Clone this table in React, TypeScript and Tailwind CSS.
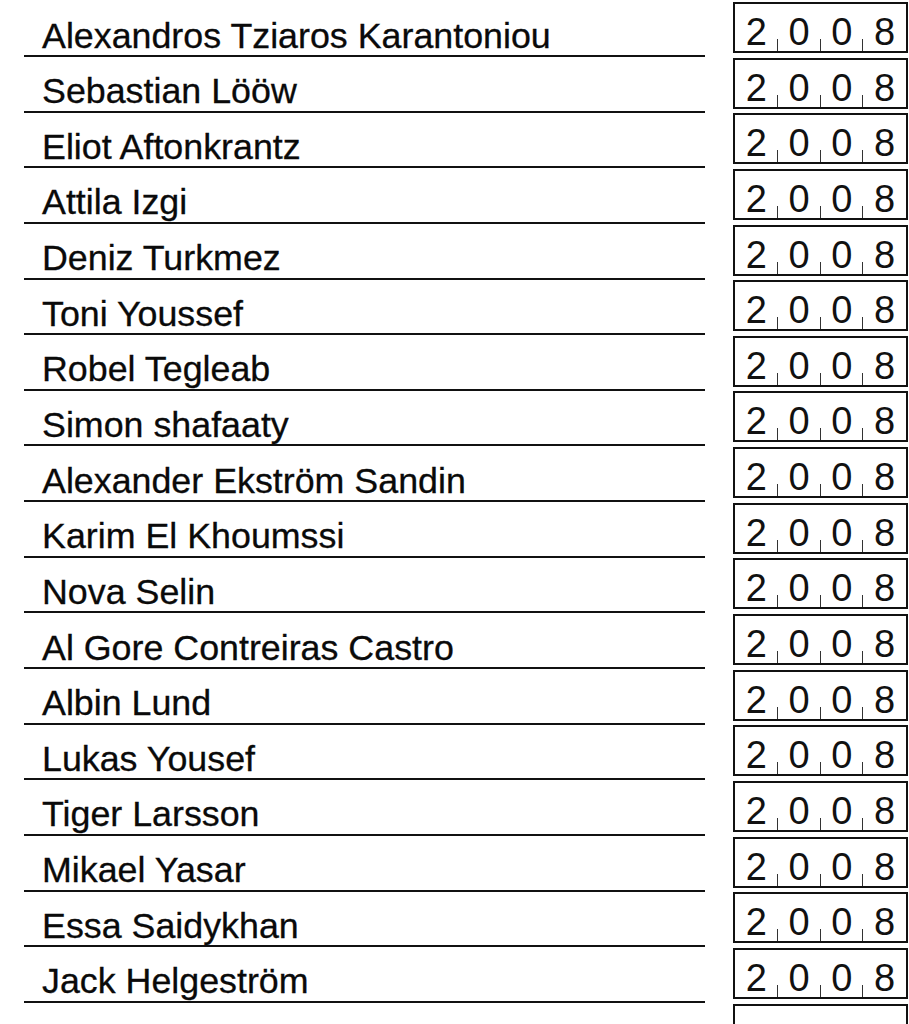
const names = [
  "Alexandros Tziaros Karantoniou",
  "Sebastian Lööw",
  "Eliot Aftonkrantz",
  "Attila Izgi",
  "Deniz Turkmez",
  "Toni Youssef",
  "Robel Tegleab",
  "Simon shafaaty",
  "Alexander Ekström Sandin",
  "Karim El Khoumssi",
  "Nova Selin",
  "Al Gore Contreiras Castro",
  "Albin Lund",
  "Lukas Yousef",
  "Tiger Larsson",
  "Mikael Yasar",
  "Essa Saidykhan",
  "Jack Helgeström",
  "",
];

function YearBox({ digits }: { digits: string[] }) {
  return (
    <div className="ml-[28px] mt-[1px] h-[51px] w-[175px] shrink-0 border-2 border-[#111]">
      <div className="grid h-full grid-cols-4">
        {digits.map((d, i) => (
          <div className="relative flex items-end justify-center" key={i}>
            <span className="text-[38px] leading-[38px] text-[#111]">{d}</span>
            {i < 3 ? <span className="absolute bottom-0 right-0 h-[12px] w-px bg-[#333]" /> : null}
          </div>
        ))}
      </div>
    </div>
  );
}

export default function App() {
  return (
    <div className="h-[1024px] w-[909px] overflow-hidden bg-white pt-[1px] font-['Liberation_Sans',Arial,sans-serif]">
      {names.map((name, i) => (
        <div className="flex h-[55.65px] items-start" key={i}>
          <div className="ml-[24px] flex h-[56px] w-[681px] shrink-0 items-end border-b-2 border-[#111] pl-[18px]">
            <span className="pb-[1.5px] text-[35.8px] leading-[36px] text-[#0a0a0a] [-webkit-text-stroke:0.3px_#0a0a0a]">
              {name}
            </span>
          </div>
          <YearBox digits={name ? ["2", "0", "0", "8"] : ["", "", "", ""]} />
        </div>
      ))}
    </div>
  );
}
